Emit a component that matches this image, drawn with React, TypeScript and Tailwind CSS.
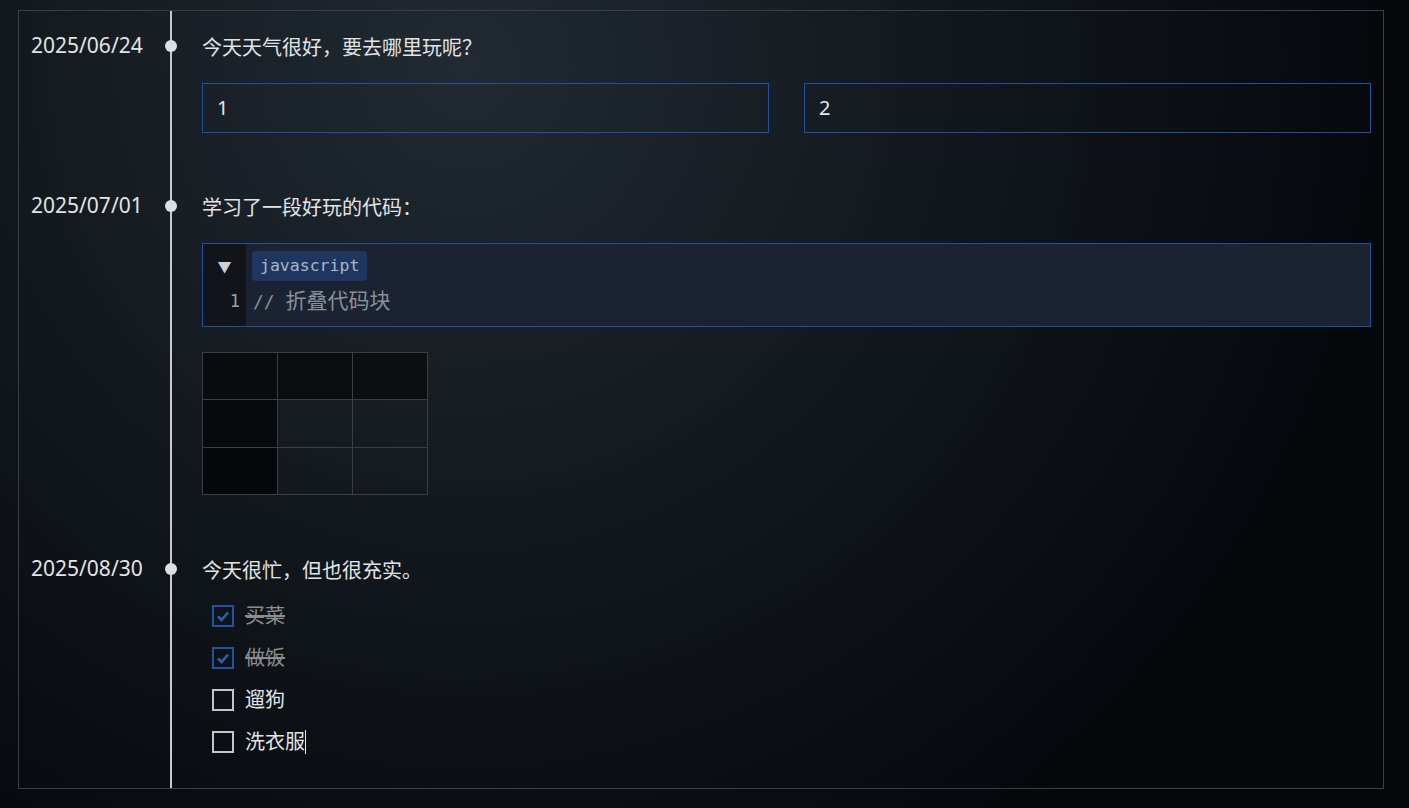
import { FC, ReactNode } from 'react';

const font = { fontFamily: '"Noto Sans", "Noto Sans CJK SC", sans-serif' };
const mono = { fontFamily: '"DejaVu Sans Mono", "Noto Sans CJK SC", monospace' };

type RowProps = {
	date: string,
	pb: string,
	last?: boolean,
	children: ReactNode
}

const TimelineRow:FC<RowProps> = ({ date, pb, last, children }) => {
	return (
		<div className={`flex ${last ? 'flex-1' : ''}`}>
			<div className="w-[151px] shrink-0 pl-3 pt-[19px] text-[21px] leading-[30px] text-[#e2e4e6]">{date}</div>
			<div className={`relative flex-1 border-l-2 border-[#c9cacc] pl-[30px] pr-3 pt-[22px] ${pb}`}>
				<div className="absolute left-[-7px] top-[29px] h-3 w-3 rounded-full bg-[#dedfe0]" />
				{children}
			</div>
		</div>
	);
};

const Check:FC<{ done:boolean, label:string, caret?:boolean }> = ({ done, label, caret }) => (
	<div className="flex h-[42px] items-center pl-[10px]">
		<div className={`flex h-[22px] w-[22px] items-center justify-center border-2 ${done ? 'border-[#2452a3]' : 'border-[#c4c5c7]'}`}>
			{done && (
				<svg width="16" height="16" viewBox="0 0 16 16" fill="none">
					<path d="M3 8.5 L6.5 12 L13 4.5" stroke="#2d5fb8" strokeWidth="2.6" />
				</svg>
			)}
		</div>
		<span className={`ml-[11px] text-[20px] ${done ? 'text-[#8b8d90] line-through' : 'text-[#e2e4e6]'}`}>{label}</span>
		{caret && <span className="h-[24px] w-px bg-[#e8e8e8]" />}
	</div>
);

const App:FC = () => {
	const cell = 'h-[47px] w-[75px] border border-[#3b3e43] p-0';
	return (
		<div style={font} className="h-[808px] w-full bg-[radial-gradient(circle_at_33%_8%,#212a32_0%,#141a20_35%,#05080b_78%)] pl-[18px] pr-[26px] pt-[10px] pb-[20px]">
			<div className="flex h-[779px] w-[1366px] flex-col overflow-hidden border border-[#3b3e43]">
				<TimelineRow date="2025/06/24" pb="pb-[38px]">
					<p className="text-[20px] leading-[30px] text-[#e2e4e6]">今天天气很好，要去哪里玩呢？</p>
					<div className="mt-5 grid grid-cols-2 gap-[35px]">
						<div className="flex h-[50px] items-center border border-[#2150a0] pl-[14px] text-[20px] text-[#e6e7e8]">1</div>
						<div className="flex h-[50px] items-center border border-[#2150a0] pl-[14px] text-[20px] text-[#e6e7e8]">2</div>
					</div>
				</TimelineRow>
				<TimelineRow date="2025/07/01" pb="pb-[39px]">
					<p className="text-[20px] leading-[30px] text-[#e2e4e6]">学习了一段好玩的代码：</p>
					<div className="mt-5 flex border border-[#2150a0] bg-[#1b2231]">
						<div className="w-[43px] shrink-0 bg-[#111419] pt-[7px] pb-[10px]">
							<div className="flex h-[30px] items-center justify-center text-[14px] text-[#cdd0d4]">▼</div>
							<div style={mono} className="mt-[5px] h-[30px] pr-[6px] text-right text-[17px] leading-[30px] text-[#9ba1a8]">1</div>
						</div>
						<div className="flex-1 pl-[6px] pt-[7px] pb-[10px]">
							<div className="flex h-[30px] items-center">
								<span style={mono} className="rounded-[4px] bg-[#1f3661] px-[8px] text-[16.5px] leading-[30px] text-[#a9b7c9]">javascript</span>
							</div>
							<div style={mono} className="mt-[5px] h-[30px] pl-px text-[18px] leading-[30px] text-[#8a9099]">
								{'// '}<span className="text-[21px]">折叠代码块</span>
							</div>
						</div>
					</div>
					<table className="mt-[25px] border-collapse">
						<tbody>
							<tr>
								<th className={`${cell} bg-[#090b0e]`} />
								<th className={`${cell} bg-[#0a0d10]`} />
								<th className={`${cell} bg-[#0c0f12]`} />
							</tr>
							<tr>
								<th className={`${cell} h-[48px] bg-[#070a0d]`} />
								<td className={`${cell} h-[48px]`} />
								<td className={`${cell} h-[48px]`} />
							</tr>
							<tr>
								<th className={`${cell} bg-[#05080b]`} />
								<td className={cell} />
								<td className={cell} />
							</tr>
						</tbody>
					</table>
				</TimelineRow>
				<TimelineRow date="2025/08/30" pb="pb-0" last>
					<p className="text-[20px] leading-[30px] text-[#e2e4e6]">今天很忙，但也很充实。</p>
					<div className="mt-[9px]">
						<Check done label="买菜" />
						<Check done label="做饭" />
						<Check done={false} label="遛狗" />
						<Check done={false} label="洗衣服" caret />
					</div>
				</TimelineRow>
			</div>
		</div>
	);
};

export default App;
